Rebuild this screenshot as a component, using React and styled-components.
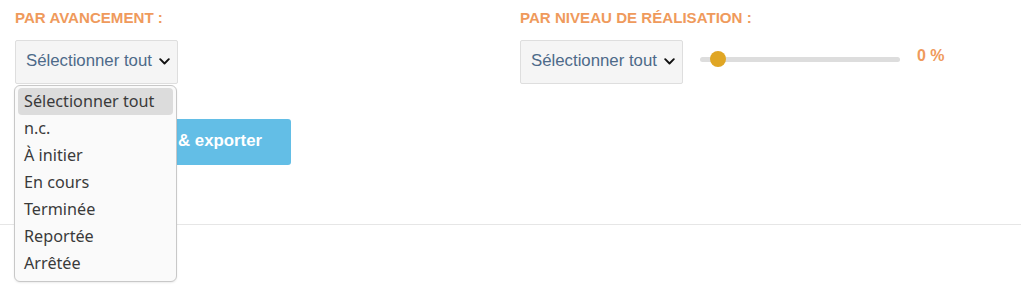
import React from 'react'
import styled, { createGlobalStyle } from 'styled-components'

const GlobalStyle = createGlobalStyle`
    body {
        margin: 0;
        background: #fff;
        font-family: "Liberation Sans", Arial, sans-serif;
    }
`

const options = ['Sélectionner tout', 'n.c.', 'À initier', 'En cours', 'Terminée', 'Reportée', 'Arrêtée']

const Chevron = () => (
    <svg width="11" height="7" viewBox="0 0 11 7" fill="none">
        <path d="M1.2 1.2 L5.5 5.5 L9.8 1.2" stroke="#111" strokeWidth="1.9" strokeLinecap="round" strokeLinejoin="round" />
    </svg>
)

const SelectBox = () => (
    <Select>
        <SelectText>Sélectionner tout</SelectText>
        <Chevron />
    </Select>
)

const App = () => {
    return (
        <>
            <GlobalStyle />
            <Page>
                <Filters>
                    <Column>
                        <Label>Par avancement :</Label>
                        <SelectBox />
                        <Button>&amp; exporter</Button>
                        <Dropdown>
                            {options.map((o, i) => (
                                <Option key={o} selected={i === 0}>{o}</Option>
                            ))}
                        </Dropdown>
                    </Column>
                    <Column>
                        <Label>Par niveau de réalisation :</Label>
                        <Row>
                            <SelectBox />
                            <Slider>
                                <Track />
                                <Thumb />
                            </Slider>
                            <Value>0 %</Value>
                        </Row>
                    </Column>
                </Filters>
                <Divider />
            </Page>
        </>
    )
}

export default App

const Page = styled.div`
    width: 1021px;
    height: 288px;
    overflow: hidden;
`

const Filters = styled.div`
    display: grid;
    grid-template-columns: 505px 1fr;
    padding: 9px 0 0 15px;
    height: 214px;
    box-sizing: border-box;
`

const Column = styled.div`
    position: relative;
    display: flex;
    flex-direction: column;
    align-items: flex-start;
`

const Label = styled.div`
    font-size: 15.1px;
    line-height: 17px;
    font-weight: 700;
    text-transform: uppercase;
    color: #ef9a5c;
    margin-bottom: 14px;
`

const Select = styled.div`
    display: flex;
    align-items: center;
    justify-content: space-between;
    box-sizing: border-box;
    width: 163px;
    height: 44px;
    padding: 0 7px 2px 10px;
    background: #f5f5f5;
    border: 1px solid #dedede;
    border-radius: 2px;
`

const SelectText = styled.span`
    font-size: 16.8px;
    color: #4d6a89;
    white-space: nowrap;
`

const Button = styled.div`
    margin-top: 35px;
    box-sizing: border-box;
    width: 276px;
    height: 46px;
    display: flex;
    align-items: center;
    justify-content: flex-end;
    padding: 0 29px 2px 0;
    background: #63bee6;
    border-radius: 3px;
    color: #fff;
    font-weight: 700;
    font-size: 16.8px;
`

const Dropdown = styled.div`
    position: absolute;
    top: 76px;
    left: -1px;
    width: 163px;
    box-sizing: border-box;
    padding: 2px 3px 4px;
    background: #fafafa;
    border: 1px solid #c8c8c8;
    border-radius: 6px;
    box-shadow: 0 1px 2px rgba(0, 0, 0, 0.08);
    font-family: "Noto Sans", "DejaVu Sans", sans-serif;
`

const Option = styled.div`
    height: 27px;
    line-height: 26px;
    padding: 0 6px;
    font-size: 16.2px;
    color: #3a3a3a;
    border-radius: 4px;
    white-space: nowrap;
    background: ${p => (p.selected ? '#dcdcdc' : 'transparent')};
`

const Row = styled.div`
    display: flex;
    align-items: flex-start;
`

const Slider = styled.div`
    position: relative;
    width: 200px;
    height: 16px;
    margin: 11px 0 0 17px;
`

const Track = styled.div`
    position: absolute;
    left: 0;
    right: 0;
    top: 6px;
    height: 5px;
    border-radius: 3px;
    background: #dddddd;
`

const Thumb = styled.div`
    position: absolute;
    left: 10px;
    top: 0;
    width: 16px;
    height: 16px;
    border-radius: 50%;
    background: #e0a624;
`

const Value = styled.div`
    margin: 7px 0 0 17px;
    font-size: 16px;
    font-weight: 700;
    color: #ef9a5c;
`

const Divider = styled.div`
    height: 1px;
    background: #e6e6e6;
    margin-top: 10px;
`
